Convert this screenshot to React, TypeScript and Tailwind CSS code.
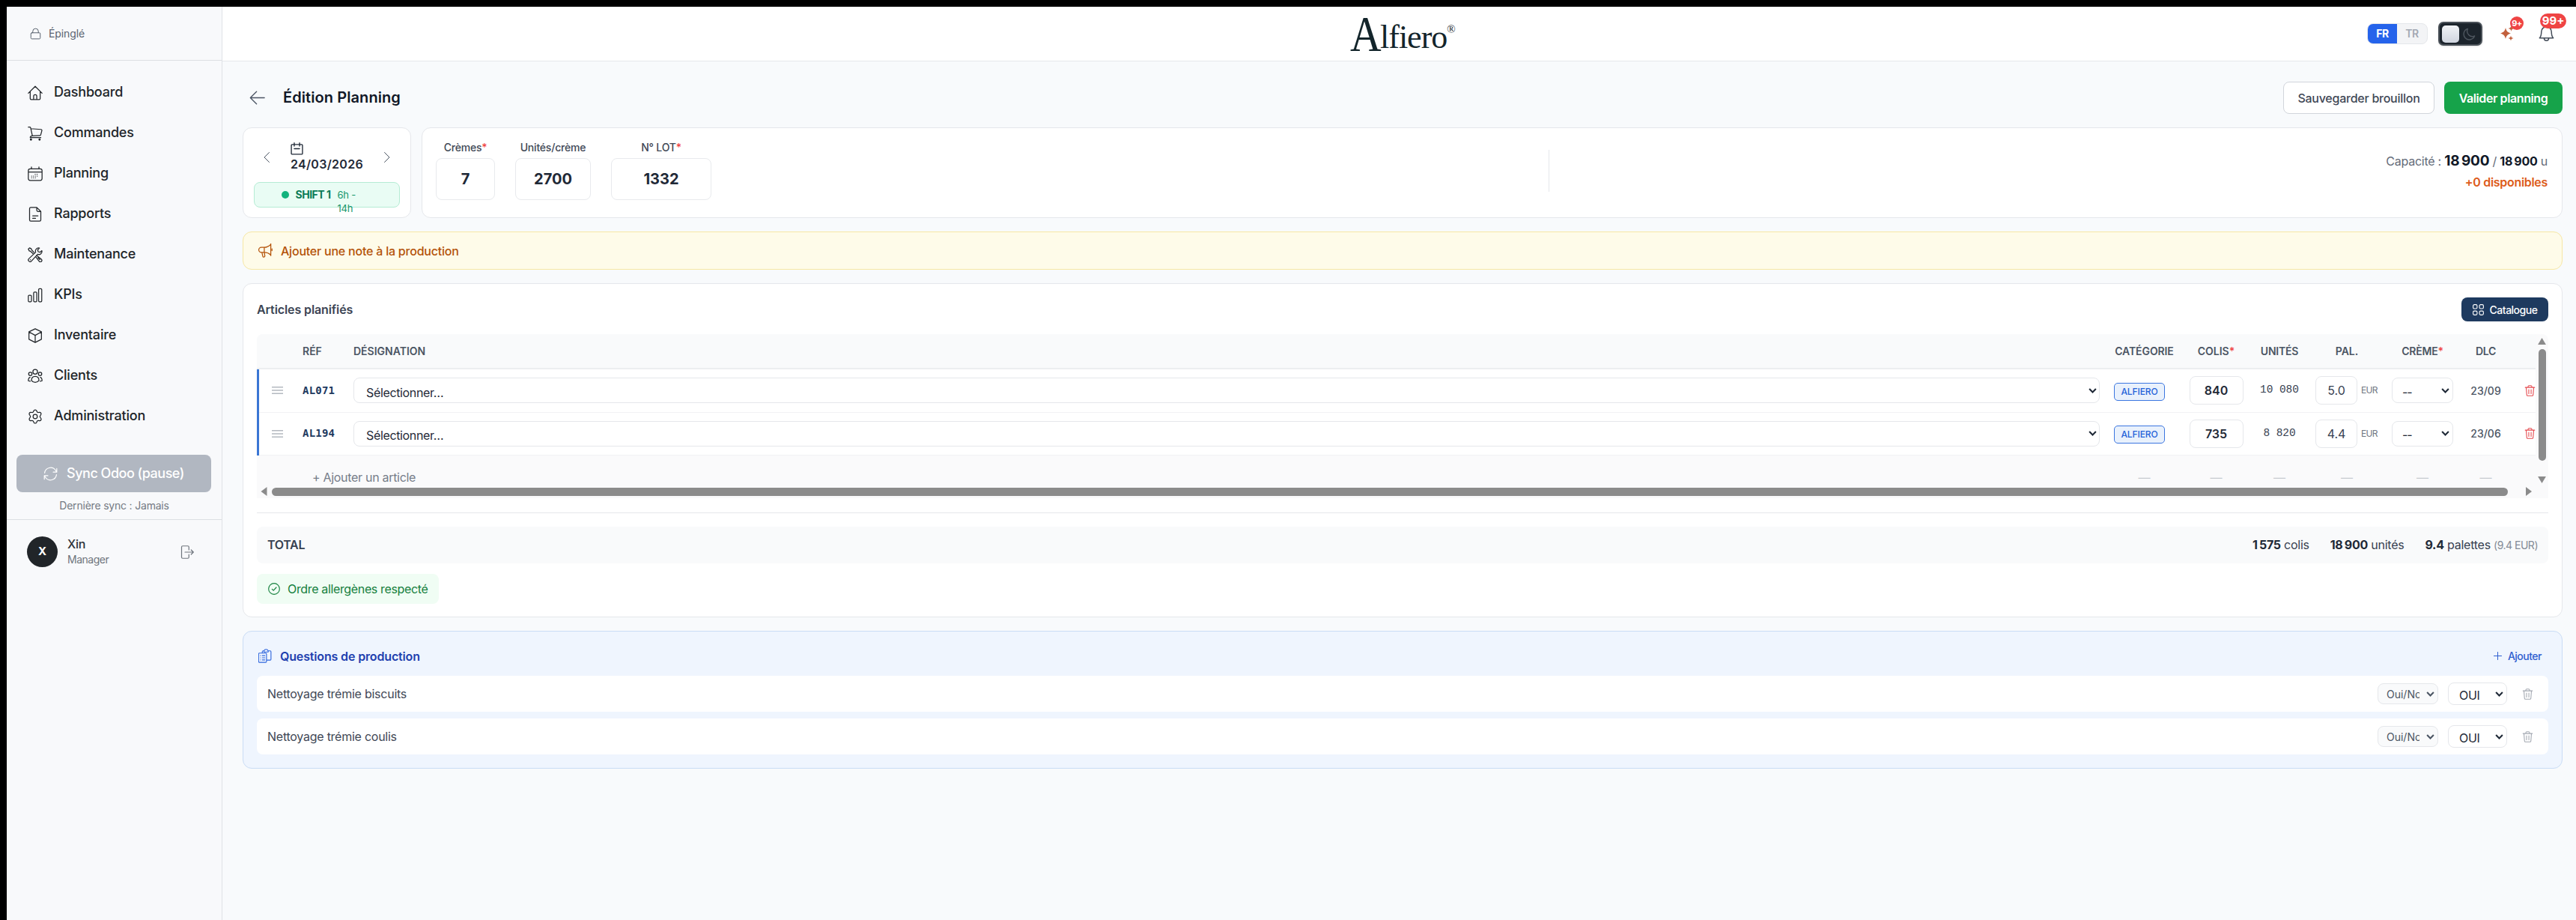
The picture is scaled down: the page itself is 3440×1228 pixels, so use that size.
import type { ReactNode } from 'react'

interface Article {
  ref: string
  colis: string
  unites: string
  palettes: string
  dlc: string
}

const articles: Article[] = [
  { ref: 'AL071', colis: '840', unites: '10 080', palettes: '5.0', dlc: '23/09' },
  { ref: 'AL194', colis: '735', unites: '8 820', palettes: '4.4', dlc: '23/06' },
]

const questions = ['Nettoyage trémie biscuits', 'Nettoyage trémie coulis']

const COLS = 'grid grid-cols-[47px_70px_2353px_101px_91px_78px_102px_100px_69px_32px]'

function Icon({ children, className, sw = 1.5 }: { children: ReactNode; className: string; sw?: number }) {
  return (
    <svg viewBox="0 0 24 24" fill="none" stroke="currentColor" strokeWidth={sw} strokeLinecap="round" strokeLinejoin="round" className={`shrink-0 ${className}`}>
      {children}
    </svg>
  )
}

const menu: { label: string; icon: ReactNode }[] = [
  {
    label: 'Dashboard',
    icon: <path d="M1 12.5 12 1.5l11 11M4 10v11a1.5 1.5 0 0 0 1.5 1.5h13A1.5 1.5 0 0 0 20 21V10M9.5 22.5v-5.200a2.500 2.500 0 0 1 5 0v5.200" />,
  },
  {
    label: 'Commandes',
    icon: (
      <>
        <path d="M1 2h2.200c.8 0 1.300.5 1.500 1.200L7.500 16M5 4.500l16.300 1.200c1 .1 1.700.9 1.400 1.900l-1.800 6.600c-.2.800-.8 1.300-1.600 1.300L7 16c-2 .2-3 1.200-3 2.800h17" />
        <circle cx="5.200" cy="21.800" r="1" fill="currentColor" />
        <circle cx="19" cy="21.800" r="1" fill="currentColor" />
      </>
    ),
  },
  {
    label: 'Planning',
    icon: (
      <>
        <path d="M4 4h16a3 3 0 0 1 3 3v12.500a3 3 0 0 1-3 3H4a3 3 0 0 1-3-3V7a3 3 0 0 1 3-3ZM1 9h22M6 1v3M18 1v3" />
        <path strokeDasharray=".1 2.900" d="M12 12.800h6M6.200 15.600h11.800M6.200 18.400h9" />
      </>
    ),
  },
  {
    label: 'Rapports',
    icon: <path d="M14.500 1H5a2 2 0 0 0-2 2v18a2 2 0 0 0 2 2h14a2 2 0 0 0 2-2V7.500L14.500 1v4.500a2 2 0 0 0 2 2H21M8 14.500h8.500M8 18.500h4.500" />,
  },
  {
    label: 'Maintenance',
    icon: (
      <>
        <path d="M22.700 5.500a5 5 0 0 1-6.700 5.800L5.800 22.300a2.700 2.700 0 0 1-4-3.800L12.800 8a5 5 0 0 1 6-6.700L16 4.200l.8 3 3 .8 2.900-2.500Z" />
        <path d="m8.500 10.200-4-3.700-2-.7L1 3l2-2 2.800 1.500.7 2 3.700 4M14.300 13.300l7.900 6.200a2.500 2.500 0 0 1-3.500 3.500l-6-7.800M16.500 16.800l3 3M4.200 20.200l.2-.2" />
      </>
    ),
  },
  {
    label: 'KPIs',
    icon: (
      <>
        <rect x="1" y="12" width="5" height="10.500" rx="1.500" />
        <rect x="9.500" y="7" width="5" height="15.500" rx="1.500" />
        <rect x="17.500" y="1.500" width="5" height="21" rx="1.500" />
      </>
    ),
  },
  {
    label: 'Inventaire',
    icon: <path d="m12 1 10 4.800v12L12 23 2 17.800v-12L12 1ZM2 6l10 5.500L22 6M12 11.500V23" />,
  },
  {
    label: 'Clients',
    icon: (
      <>
        <circle cx="12" cy="5" r="3.700" />
        <circle cx="4.200" cy="8.500" r="2.700" />
        <circle cx="19.800" cy="8.500" r="2.700" />
        <path d="M12 12.500c3.500 0 6 2.500 6 6.500-1.500 2-3.500 3-6 3s-4.500-1-6-3c0-4 2.500-6.500 6-6.500ZM3.800 14C2 14.500 1 16.500 1 19.500l3 .7M20.200 14c1.800.5 2.800 2.500 2.800 5.500l-3 .7" />
      </>
    ),
  },
  {
    label: 'Administration',
    icon: (
      <>
        <circle cx="12" cy="12" r="3.400" />
        <path d="M9.700 2.800a2.500 2.500 0 0 1 4.600 0l.4 1a2.500 2.500 0 0 0 2.900 1.600l1-.2a2.500 2.500 0 0 1 2.400 4l-.7 1.100a2.500 2.500 0 0 0 0 3.400l.7.900a2.500 2.500 0 0 1-2.400 4.100l-1-.2a2.500 2.500 0 0 0-2.900 1.700l-.4 1a2.500 2.500 0 0 1-4.600 0l-.4-1a2.500 2.500 0 0 0-2.900-1.700l-1 .2a2.500 2.500 0 0 1-2.400-4l.7-1a2.500 2.500 0 0 0 0-3.400L3 9.300a2.500 2.500 0 0 1 2.400-4.100l1 .2a2.500 2.500 0 0 0 2.900-1.600Z" />
      </>
    ),
  },
]

function Trash({ className }: { className: string }) {
  return (
    <Icon className={className} sw={1.7}>
      <path d="M2 5h20M4 5l1.200 16c.1 1 .9 1.800 2 1.800h9.600c1.100 0 1.900-.8 2-1.800L20 5M8 5V3.200C8 2 9 1.200 10 1.200h4c1 0 2 .8 2 2V5M9.500 9.500v9M14.500 9.500v9" />
    </Icon>
  )
}

function Caret() {
  return (
    <svg viewBox="0 0 12 8" fill="none" stroke="currentColor" strokeWidth="2.400" className="h-[7px] w-[11px] shrink-0">
      <path d="m1 1.200 5 5 5-5" />
    </svg>
  )
}

function Sidebar() {
  return (
    <aside className="flex w-[288px] shrink-0 flex-col border-r border-[#dfe2e6] bg-[#f8f9fb]">
      <div className="flex h-[72px] shrink-0 items-center gap-[10px] border-b border-[#dcdfe3] pl-[31px] text-[14px] tracking-[-0.1px] text-[#5b6470]">
        <Icon className="h-[18px] w-[15px]" sw={1.6}>
          <path d="M4 10h16a2 2 0 0 1 2 2v9a2 2 0 0 1-2 2H4a2 2 0 0 1-2-2v-9a2 2 0 0 1 2-2ZM6 10V7a6 6 0 0 1 12 0v3" />
        </Icon>
        <span className="pb-px">Épinglé</span>
      </div>

      <nav className="flex flex-col pt-[15px]">
        {menu.map(item => (
          <a key={item.label} className="flex h-[54px] items-center gap-[15px] pl-[28px] text-[#212529]">
            <Icon className="mt-[2px] h-[20px] w-[20px]">{item.icon}</Icon>
            <span className="pb-[2px] text-[18px] font-medium tracking-[-0.2px]">{item.label}</span>
          </a>
        ))}
      </nav>

      <button className="mx-[13px] mt-[25px] flex h-[50px] w-[260px] shrink-0 items-center justify-center gap-[12px] rounded-lg bg-[#b1b7c1] text-white">
        <Icon className="h-[19px] w-[19px]">
          <path d="M22.500 3v6h-6M1.500 21v-6h6M2 10.500A10.200 10.200 0 0 1 20.500 6l2 3M22 13.500A10.200 10.200 0 0 1 3.500 18l-2-3" />
        </Icon>
        <span className="pb-px text-[18px] font-medium tracking-[-0.5px]">Sync Odoo (pause)</span>
      </button>
      <p className="mt-[8px] text-center text-[14px] leading-[20px] tracking-[-0.2px] text-[#747a83]">Dernière sync : Jamais</p>

      <div className="mt-[8px] flex items-center border-t border-[#dcdfe3] pl-[27px] pt-[22px]">
        <div className="flex h-[41px] w-[41px] items-center justify-center rounded-full bg-[#212529] text-[15px] font-bold text-white">X</div>
        <div className="ml-[13px] flex-1">
          <p className="text-[16px] font-medium leading-[21px] tracking-[-0.3px] text-[#2d3238]">Xin</p>
          <p className="text-[14px] leading-[20px] tracking-[-0.5px] text-[#6f757d]">Manager</p>
        </div>
        <Icon className="mr-[37px] h-[20px] w-[18px] text-[#6f757d]" sw={1.6}>
          <path d="M15 8V3a2 2 0 0 0-2-2H4a2 2 0 0 0-2 2v18a2 2 0 0 0 2 2h9a2 2 0 0 0 2-2v-5M8 12h15M19 8l4 4-4 4" />
        </Icon>
      </div>
    </aside>
  )
}

function TopBar() {
  return (
    <header className="flex h-[73px] shrink-0 items-center border-b border-[#e5e7eb] bg-white">
      <div className="w-[1506px] shrink-0" />
      <div className="flex h-[72px] w-[160px] shrink-0 items-end pb-[11px] font-['Liberation_Serif',serif] text-[#13252b]">
        <span className="w-[40px] origin-bottom-left scale-x-[0.86] text-[67px] leading-[50px]">A</span>
        <span className="text-[44px] leading-[41px] tracking-[-1px]">lfiero</span>
        <span className="self-start pt-[23px] text-[15px] leading-[15px]">®</span>
      </div>
      <div className="flex flex-1 items-center justify-end pr-[29px]">
        <div className="flex h-[28px] w-[81px] overflow-hidden rounded-lg border border-[#e5e7eb] bg-[#f3f4f6] text-[14px] font-bold leading-[26px] tracking-[-0.4px]">
          <span className="w-[39px] bg-[#2563eb] text-center text-white">FR</span>
          <span className="flex-1 text-center font-semibold text-[#a3a9b3]">TR</span>
        </div>
        <div className="ml-[14px] flex h-[32px] w-[59px] items-center justify-between rounded-[7px] border-2 border-[#4b5259] bg-[#1c242c] pl-[3px] pr-[7px] shadow-sm">
          <div className="h-[23px] w-[23px] rounded-[5px] bg-gradient-to-b from-[#f1f3f6] to-[#d0d5df]" />
          <Icon className="h-[17px] w-[17px] text-[#4e565f]" sw={2}>
            <path d="M9 2a10.500 10.500 0 1 0 13 13.500A10 10 0 0 1 9 2Z" />
          </Icon>
        </div>
        <div className="relative ml-[23px] h-[22px] w-[20px]">
          <svg viewBox="0 0 20 22" className="h-full w-full fill-[#c2603d]">
            <path d="M8 3c1 4.500 2.500 6 7 7.500C10.500 12 9 13.500 8 18c-1-4.500-2.500-6-7-7.500C5.500 9 7 7.500 8 3ZM15 13.500c.5 2.200 1.200 3 3.500 3.500-2.300.5-3 1.300-3.500 3.500-.5-2.200-1.200-3-3.500-3.500 2.300-.5 3-1.300 3.500-3.500ZM15.500 0c.5 2.700 1.300 3.500 4 4-2.700.5-3.500 1.300-4 4-.5-2.700-1.300-3.500-4-4 2.700-.5 3.500-1.300 4-4Z" />
          </svg>
          <span className="absolute -top-[12px] left-[14px] flex h-[18px] w-[18px] items-center justify-center rounded-full bg-[#ef4444] text-[11px] font-bold tracking-[-0.6px] text-white">9+</span>
        </div>
        <div className="relative ml-[32px] h-[24px] w-[21px] text-[#434c58]">
          <Icon className="h-[24px] w-[21px]" sw={1.7}>
            <path d="M1.500 18.500h21c-2-2-2.800-5-2.800-9.500a7.700 7.700 0 0 0-15.400 0c0 4.500-.8 7.500-2.800 9.500ZM8.500 18.800c0 5 7 5 7 0M12 1v-1" />
          </Icon>
          <span className="absolute -top-[15px] left-[2px] flex h-[20px] w-[35px] items-center justify-center rounded-full bg-[#ef4444] text-[15px] font-bold text-white">99+</span>
        </div>
      </div>
    </header>
  )
}

function NumberField({ label, value, required, box }: { label: string; value: string; required?: boolean; box: string }) {
  return (
    <div className="flex flex-col items-center">
      <span className="text-[14px] font-medium leading-[20px] tracking-[-0.2px] text-[#3f4856]">
        {label}
        {required && <span className="text-[#ef4444]">*</span>}
      </span>
      <div className={`mt-[4px] flex h-[56px] items-center justify-center rounded-lg border border-[#e8eaed] bg-white text-[20px] font-bold text-[#1f2937] ${box}`}>
        {value}
      </div>
    </div>
  )
}

function Summary() {
  return (
    <div className="mt-[18px] flex h-[121px] gap-[14px]">
      <section className="w-[225px] shrink-0 rounded-xl border border-[#e5e7eb] bg-white px-[14px] pt-[18px]">
        <div className="flex h-[42px] items-center justify-between px-[11px] text-[#4b5563]">
          <Icon className="h-[18px] w-[12px]" sw={2}>
            <path d="M19-1 6 12l13 13" />
          </Icon>
          <div className="ml-px w-[98px] text-[#1f2937]">
            <Icon className="h-[17px] w-[17px]" sw={1.9}>
              <path d="M3 4h18a1.500 1.500 0 0 1 1.500 1.500V21a1.500 1.500 0 0 1-1.500 1.500H3A1.500 1.500 0 0 1 1.500 21V5.500A1.500 1.500 0 0 1 3 4ZM7 1v6M17 1v6M7 12h10" />
            </Icon>
            <p className="mt-px text-[16px] font-semibold leading-[22px] tracking-[0.3px]">24/03/2026</p>
          </div>
          <Icon className="h-[18px] w-[12px]" sw={2}>
            <path d="m5-1 13 13L5 25" />
          </Icon>
        </div>
        <div className="mt-[12px] flex h-[34px] items-start justify-center rounded-lg border border-[#b5ecd4] bg-[#e9fcf4] pr-[11px]">
          <span className="mt-[11px] h-[10px] w-[10px] rounded-full bg-[#13b37d]" />
          <span className="ml-[9px] mt-[6px] text-[14px] font-bold leading-[19px] tracking-[-0.5px] text-[#0b7a55]">SHIFT 1</span>
          <span className="ml-[9px] mt-[7px] w-[36px] text-[13px] leading-[18px] tracking-[-0.2px] text-[#15966c]">6h - 14h</span>
        </div>
      </section>

      <section className="flex flex-1 rounded-xl border border-[#e5e7eb] bg-white pl-[18px] pr-[19px] pt-[16px]">
        <div className="flex gap-[27px]">
          <NumberField label="Crèmes" value="7" required box="w-[79px]" />
          <NumberField label="Unités/crème" value="2700" box="w-[101px]" />
          <NumberField label="N° LOT" value="1332" required box="w-[134px]" />
        </div>
        <div className="ml-[1118px] mt-[13px] h-[56px] w-px bg-[#e5e7eb]" />
        <div className="flex-1 pt-[13px] text-right text-[16px] tracking-[-0.25px] text-[#646b78]">
          <p className="leading-[30px]">
            Capacité : <b className="text-[19px] text-[#111827]">18&#8239;900</b> / <b className="text-[#111827]">18&#8239;900</b> u
          </p>
          <p className="font-semibold leading-[26px] tracking-[-0.3px] text-[#dd5c1b]">+0 disponibles</p>
        </div>
      </section>
    </div>
  )
}

function ArticleRow({ article }: { article: Article }) {
  return (
    <div className={`${COLS} relative h-[57.500px] items-center border-b border-[#f1f2f4] text-[#374151]`}>
      <span className="absolute -bottom-px left-0 top-0 w-[3px] bg-[#3b76d4]" />
      <div className="pl-[20px] text-[#b4b9c0]">
        <svg viewBox="0 0 15 10" stroke="currentColor" strokeWidth="1.500" className="h-[10px] w-[15px]">
          <path d="M0 .8h15M0 5h15M0 9.200h15" />
        </svg>
      </div>
      <div className="pl-[14px] font-['DejaVu_Sans_Mono',monospace] text-[14px] font-bold tracking-[0.2px] text-[#1e3a5f]">{article.ref}</div>
      <div className="pl-[12px] pr-[9px]">
        <div className="flex h-[34px] items-center justify-between rounded-lg border border-[#e5e7eb] bg-white pl-[16px] pr-[3px] text-[#1f2937]">
          <span className="pt-[5px] text-[16px] tracking-[-0.35px]">Sélectionner…</span>
          <Caret />
        </div>
      </div>
      <div className="flex justify-center pt-[3px] pr-[16px]">
        <span className="ml-[3px] flex h-[24px] w-[68px] items-center justify-center rounded-[5px] border border-[#3b76e0] bg-[#e9f1fc] text-[12px] font-medium tracking-[-0.1px] text-[#2563d9]">ALFIERO</span>
      </div>
      <div className="flex justify-center">
        <span className="flex h-[38px] w-[72px] items-center justify-center rounded-lg border border-[#e5e7eb] text-[16px] font-semibold text-[#1f2937]">{article.colis}</span>
      </div>
      <div className="whitespace-pre text-center font-['Liberation_Mono',monospace] text-[14.400px] text-[#374151]">{article.unites}</div>
      <div className="flex items-center gap-[5px] pl-[9px]">
        <span className="flex h-[38px] w-[56px] items-center justify-center rounded-lg border border-[#e5e7eb] text-[16px] text-[#374151]">{article.palettes}</span>
        <span className="text-[12px] tracking-[-0.7px] text-[#6f7681]">EUR</span>
      </div>
      <div className="px-[9px]">
        <div className="flex h-[34px] items-center justify-between rounded-lg border border-[#e5e7eb] pl-[13px] pr-[4px] text-[#1f2937]">
          <span className="pt-[3px] text-[16px] tracking-[-1px]">--</span>
          <Caret />
        </div>
      </div>
      <div className="text-center text-[14px] font-medium text-[#4b5563]">{article.dlc}</div>
      <Trash className="ml-[17px] h-[17px] w-[15px] text-[#e5484d]" />
    </div>
  )
}

function Articles() {
  return (
    <section className="mt-[18px] flex h-[446px] flex-col rounded-xl border border-[#e5e7eb] bg-white px-[18px] pt-[18px]">
      <div className="flex items-center justify-between">
        <h2 className="text-[16px] font-semibold tracking-[-0.1px] text-[#3b4453]">Articles planifiés</h2>
        <button className="flex h-[32px] w-[116px] items-center justify-center gap-[8px] rounded-lg bg-[#1e3a5f] text-white">
          <Icon className="h-[15px] w-[15px]" sw={1.8}>
            <rect x="1" y="1" width="8.500" height="8.500" rx="2.500" />
            <rect x="14.500" y="1" width="8.500" height="8.500" rx="2.500" />
            <rect x="1" y="14.500" width="8.500" height="8.500" rx="2.500" />
            <rect x="14.500" y="14.500" width="8.500" height="8.500" rx="2.500" />
          </Icon>
          <span className="text-[14px] font-medium tracking-[-0.5px]">Catalogue</span>
        </button>
      </div>

      <div className="mt-[17px] flex h-[219px] overflow-hidden rounded-t-lg bg-[#fafafb]">
        <div className="flex w-[3043px] flex-col">
          <div className={`${COLS} h-[47px] shrink-0 items-center border-b-2 border-[#eceef0] bg-[#f9fafb] pb-px text-center text-[14px] font-semibold text-[#4b5563]`}>
            <span />
            <span className="pl-[14px] text-left">RÉF</span>
            <span className="pl-[12px] text-left">DÉSIGNATION</span>
            <span className="tracking-[-0.1px]">CATÉGORIE</span>
            <span>COLIS<span className="text-[#ef4444]">*</span></span>
            <span className="tracking-[-0.2px]">UNITÉS</span>
            <span>PAL.</span>
            <span className="tracking-[-0.2px]">CRÈME<span className="text-[#ef4444]">*</span></span>
            <span className="tracking-[-0.3px]">DLC</span>
          </div>
          <div className="bg-white">
            {articles.map(article => (
              <ArticleRow key={article.ref} article={article} />
            ))}
          </div>
          <div className={`${COLS} h-[42px] items-center pt-[16px] text-center text-[16px] text-[#c6cad0]`}>
            <span />
            <span className="col-span-2 pl-[27px] text-left tracking-[-0.3px] text-[#767d89]">+ Ajouter un article</span>
            <span>—</span>
            <span>—</span>
            <span>—</span>
            <span>—</span>
            <span>—</span>
            <span>—</span>
          </div>
          <div className="flex items-center pl-[5px]">
            <svg viewBox="0 0 8 12" className="h-[12px] w-[9px] fill-[#8b8b8b]"><path d="M8 0v12L0 6Z" /></svg>
            <div className="ml-[6px] h-[11px] w-[2986px] rounded-full bg-[#8b8b8b]" />
            <svg viewBox="0 0 8 12" className="ml-[24px] h-[12px] w-[8px] fill-[#8b8b8b]"><path d="M0 0v12l8-6Z" /></svg>
          </div>
        </div>
        <div className="flex flex-1 flex-col items-center pt-[5px]">
          <svg viewBox="0 0 12 10" className="h-[9px] w-[11px] fill-[#8b8b8b]"><path d="M0 10h12L6 0Z" /></svg>
          <div className="mb-[21px] mt-[6px] h-[149px] w-[10px] rounded-full bg-[#8b8b8b]" />
          <svg viewBox="0 0 12 10" className="h-[9px] w-[11px] fill-[#8b8b8b]"><path d="M0 0h12L6 10Z" /></svg>
        </div>
      </div>

      <div className="mt-[19px] h-px shrink-0 bg-[#e5e7eb]" />

      <div className="mt-[18px] flex h-[49px] shrink-0 items-center justify-between rounded-lg bg-[#f9fafb] px-[14px] pb-px text-[16px] text-[#374151]">
        <span className="font-semibold tracking-[-0.3px]">TOTAL</span>
        <div className="flex gap-[28px] tracking-[-0.25px]">
          <span><b className="text-[#1f2937]">1&#8239;575</b> colis</span>
          <span><b className="text-[#1f2937]">18&#8239;900</b> unités</span>
          <span>
            <b className="text-[#1f2937]">9.4</b> palettes <span className="text-[14px] tracking-[-0.5px] text-[#848b96]">(9.4 EUR)</span>
          </span>
        </div>
      </div>

      <div className="mt-[14px] flex h-[40px] w-[243px] shrink-0 items-center gap-[10px] rounded-lg bg-[#f0fdf4] pl-[15px] text-[#15803d]">
        <Icon className="h-[16px] w-[16px]" sw={1.7}>
          <circle cx="12" cy="12" r="11" />
          <path d="m8 12.500 2.800 2.800L16.500 9" />
        </Icon>
        <span className="text-[16px] tracking-[-0.35px]">Ordre allergènes respecté</span>
      </div>
    </section>
  )
}

function Questions() {
  return (
    <section className="mt-[18px] h-[184px] rounded-xl border border-[#c9dcf5] bg-[#eff5fe] px-[18px] pt-[20px]">
      <div className="flex h-[26px] items-center pb-px pr-[9px]">
        <Icon className="ml-[2px] h-[21px] w-[18px] text-[#2f66dd]">
          <path d="M2 7h11a1.500 1.500 0 0 1 1.500 1.500V22A1.500 1.500 0 0 1 13 23.500H2A1.500 1.500 0 0 1 .5 22V8.500A1.500 1.500 0 0 1 2 7ZM7 7V4.500A1.500 1.500 0 0 1 8.500 3H10a4 4 0 0 1 7.500 0H21a1.500 1.500 0 0 1 1.500 1.500V18a1.500 1.500 0 0 1-1.500 1.500h-6.500M10 3v2h7.500V3M3.800 11.500h.1M7 11.500h4.500M3.800 15.300h.1M7 15.300h4.500M3.800 19.100h.1M7 19.100h4.500" />
        </Icon>
        <h2 className="ml-[11px] flex-1 text-[16px] font-semibold tracking-[-0.15px] text-[#1e40af]">Questions de production</h2>
        <button className="flex items-center gap-[8px] text-[14px] font-medium tracking-[-0.5px] text-[#2f5fd0]">
          <Icon className="h-[11px] w-[11px]" sw={2.200}>
            <path d="M12 1v22M1 12h22" />
          </Icon>
          Ajouter
        </button>
      </div>

      <div className="mt-[13px] flex flex-col gap-[9px]">
        {questions.map(question => (
          <div key={question} className="flex h-[48px] items-center rounded-lg bg-white pl-[14px] pr-[20px]">
            <span className="flex-1 text-[16px] tracking-[-0.25px] text-[#3f4856]">{question}</span>
            <div className="flex h-[28px] w-[81px] items-center rounded-lg border border-[#e5e7eb] bg-[#f9fafb] pl-[11px] pr-[4px] text-[#4b5563]">
              <span className="w-[44px] overflow-hidden whitespace-nowrap pt-[2px] text-[14px] leading-[20px]">Oui/Non</span>
              <span className="ml-[9px] flex"><Caret /></span>
            </div>
            <div className="ml-[13px] flex h-[30px] w-[79px] items-center justify-between rounded-lg border border-[#e5e7eb] pl-[14px] pr-[4px] text-[#1f2937]">
              <span className="pt-[3px] text-[16px] tracking-[-0.3px]">OUI</span>
              <Caret />
            </div>
            <Trash className="ml-[20px] h-[17px] w-[15px] text-[#a3a8b1]" />
          </div>
        ))}
      </div>
    </section>
  )
}

export default function App() {
  return (
    <div className="flex h-[1228px] w-[3440px] overflow-hidden bg-black pl-[9px] pt-[9px] font-[Inter,sans-serif]">
      <Sidebar />
      <div className="flex flex-1 flex-col bg-[#f8fafc]">
        <TopBar />
        <main className="flex flex-col pl-[27px] pr-[18px] pt-[27px]">
          <div className="flex h-[43px] items-center">
            <Icon className="ml-[9px] h-[21px] w-[21px] text-[#4b5563]">
              <path d="M23 12H1.500M11 2.500 1.500 12l9.500 9.500" />
            </Icon>
            <h1 className="ml-[24px] flex-1 pb-px text-[20px] font-semibold tracking-[0.08px] text-[#111827]">Édition Planning</h1>
            <button className="h-[43px] w-[202px] rounded-lg border border-[#d1d5db] bg-white text-[16px] font-medium tracking-[-0.25px] text-[#3f4856]">Sauvegarder brouillon</button>
            <button className="ml-[13px] h-[43px] w-[158px] rounded-lg bg-[#16a34a] text-[16px] font-semibold tracking-[-0.4px] text-white">Valider planning</button>
          </div>

          <Summary />

          <div className="mt-[18px] flex h-[51px] items-center gap-[11px] rounded-xl border border-[#f6e7a4] bg-[#fefbe9] pl-[20px] text-[#b45309]">
            <Icon className="h-[19px] w-[19px]" sw={1.6}>
              <path d="M5 6.500h5c4 0 8-2 11-5v18c-3-3-7-4.500-11-4.500H5a4.250 4.250 0 0 1 0-8.500ZM10 6.500V15M21 .5v20M6 15l1.500 6.500c.5 2 3.500 1.500 3.500-.5l-1-6M23 9v3" />
            </Icon>
            <span className="text-[16px] font-medium tracking-[-0.22px]">Ajouter une note à la production</span>
          </div>

          <Articles />
          <Questions />
        </main>
      </div>
    </div>
  )
}
